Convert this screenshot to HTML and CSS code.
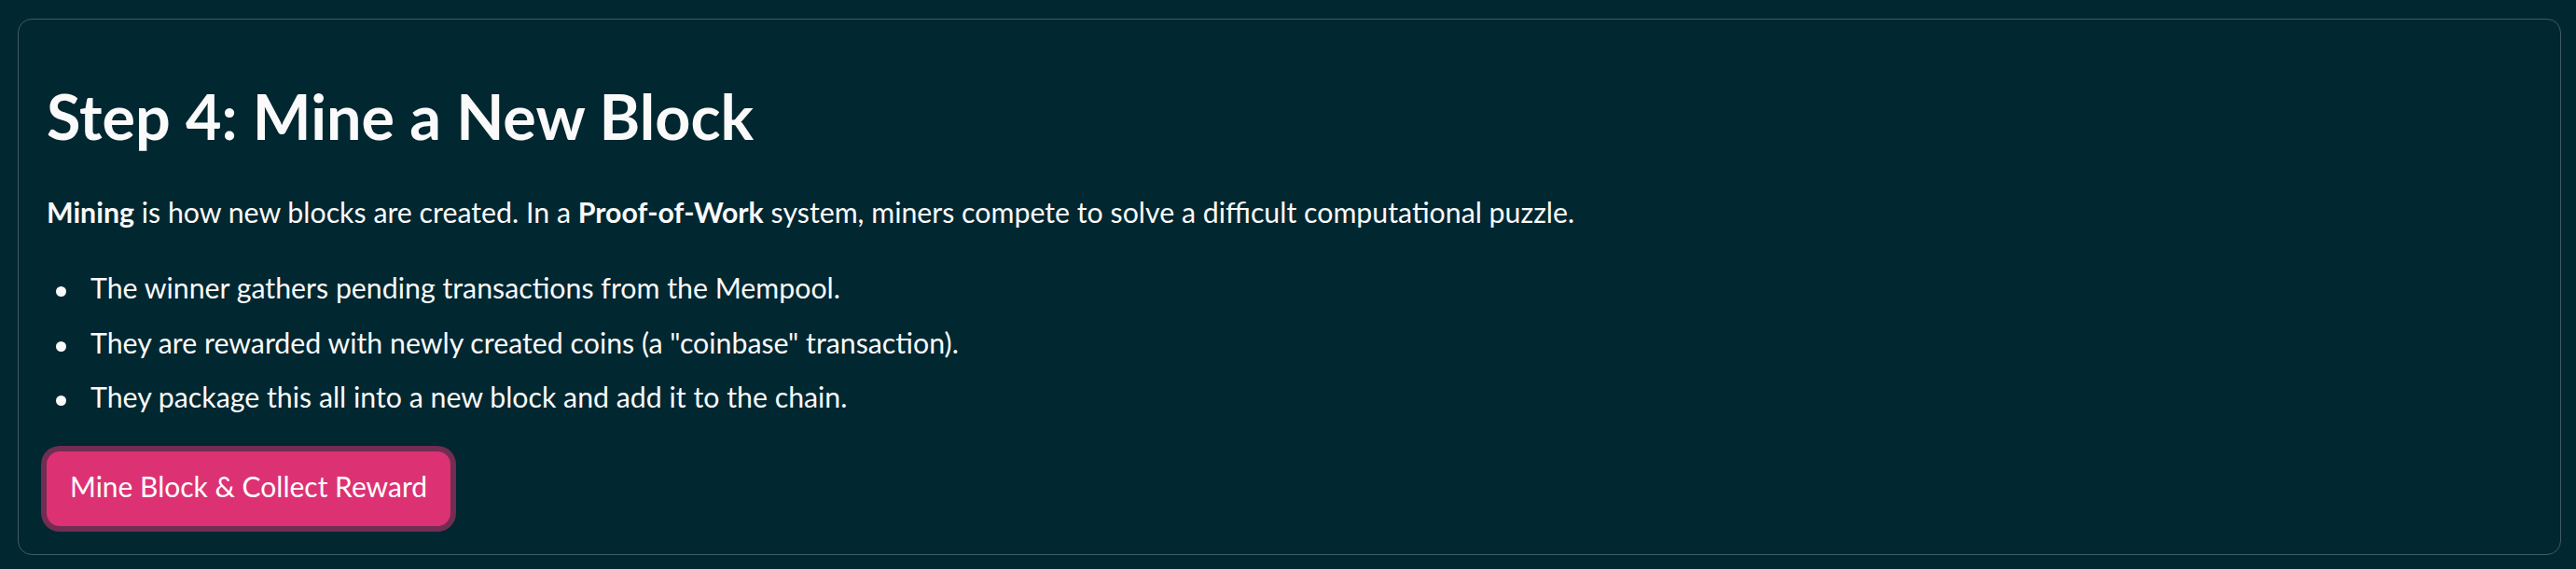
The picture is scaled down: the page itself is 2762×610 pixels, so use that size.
FILE: index.html
```html
<!DOCTYPE html>
<html lang="en">
<head>
<meta charset="utf-8">
<title>Step 4: Mine a New Block</title>
<link rel="stylesheet" href="styles.css">
</head>
<body>
<section class="card">
  <h2 class="title">Step 4: Mine a New Block</h2>
  <p class="lead"><strong>Mining</strong> is how new blocks are created. In a <strong>Proof-of-Work</strong> system, miners compete to solve a difficult computational puzzle.</p>
  <ul class="points">
    <li>The winner gathers pending transactions from the Mempool.</li>
    <li>They are rewarded with newly created coins (a "coinbase" transaction).</li>
    <li>They package this all into a new block and add it to the chain.</li>
  </ul>
  <div class="actions">
    <button class="btn" type="button">Mine Block &amp; Collect Reward</button>
  </div>
</section>
</body>
</html>
```
FILE: styles.css
```css
html, body {
  margin: 0;
  padding: 0;
  background: #012731;
}
body {
  padding: 20px 16px 15px 19px;
  font-family: Lato, "Noto Sans", sans-serif;
  color: #fafafa;
}
.card {
  border: 1px solid #3f5c65;
  border-radius: 15px;
  padding: 63px 30px 30px 30px;
  display: flex;
  flex-direction: column;
  align-items: flex-start;
}
.title {
  margin: 0;
  font-size: 66.5px;
  line-height: 80px;
  font-weight: 700;
  color: #fafafa;
}
.lead {
  margin: 39px 0 0 0;
  font-size: 30.3px;
  line-height: 48px;
}
.lead strong {
  font-weight: 700;
}
.points {
  list-style: none;
  margin: 33px 0 0 0;
  padding: 0;
  display: flex;
  flex-direction: column;
  gap: 10.5px;
}
.points li {
  display: flex;
  align-items: flex-start;
  font-size: 30.3px;
  line-height: 48px;
}
.points li::before {
  content: "";
  flex: none;
  width: 11px;
  height: 11px;
  border-radius: 50%;
  background: #fafafa;
  margin: 23px 26.5px 0 9.5px;
}
.actions {
  margin-top: 35px;
}
.btn {
  font-family: Lato, "Noto Sans", sans-serif;
  font-size: 30px;
  line-height: 75px;
  height: 80px;
  padding: 0 25px 5px;
  color: #ffffff;
  background: #dc3274;
  border: none;
  border-radius: 14px;
  box-shadow: 0 0 0 6px #722d52;
  cursor: pointer;
}
```
